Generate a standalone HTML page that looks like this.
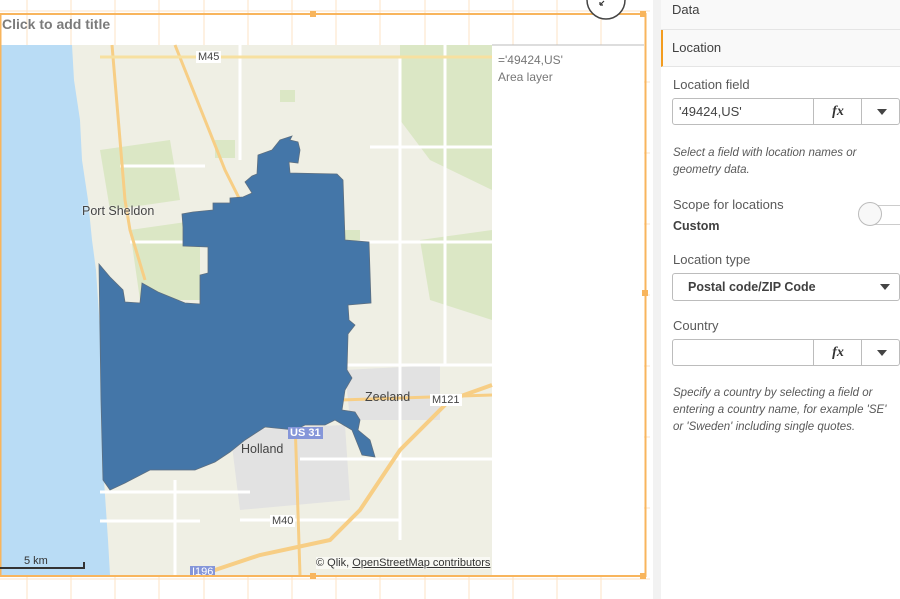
<!DOCTYPE html>
<html><head><meta charset="utf-8"><style>
body{margin:0;width:900px;height:599px;overflow:hidden;background:#fff;font-family:"Liberation Sans",sans-serif;position:relative}
.abs{position:absolute}
.panel{position:absolute;left:661px;top:0;width:239px;height:599px;background:#fff}
.lbl{position:absolute;left:12px;font-size:13px;color:#595959}
.box{position:absolute;left:11px;width:228px;height:27px;border:1px solid #bcbcbc;border-radius:3px;background:#fff;box-sizing:border-box}
.hint{position:absolute;left:12px;font-size:11.5px;font-style:italic;color:#595959;line-height:17px;width:220px}
.fx{position:absolute;left:140px;top:0;width:48px;height:25px;border-left:1px solid #bcbcbc;font:italic bold 14px "Liberation Serif",serif;text-align:center;line-height:25px;color:#333}
.dd{position:absolute;left:188px;top:0;width:40px;height:25px;border-left:1px solid #bcbcbc}
.tri{position:absolute;width:0;height:0;border-left:5px solid transparent;border-right:5px solid transparent;border-top:6px solid #444}
.rl{position:absolute;background:#fff;font-size:11px;color:#444;padding:0 2px;line-height:12px}
</style></head><body>
<svg class="abs" style="left:0;top:0" width="661" height="599">
<g stroke="#fde3c6" stroke-width="1">
<line x1="27" y1="0" x2="27" y2="599"/><line x1="71" y1="0" x2="71" y2="599"/><line x1="115" y1="0" x2="115" y2="599"/><line x1="159" y1="0" x2="159" y2="599"/><line x1="204" y1="0" x2="204" y2="599"/><line x1="248" y1="0" x2="248" y2="599"/><line x1="292" y1="0" x2="292" y2="599"/><line x1="336" y1="0" x2="336" y2="599"/><line x1="380" y1="0" x2="380" y2="599"/><line x1="425" y1="0" x2="425" y2="599"/><line x1="469" y1="0" x2="469" y2="599"/><line x1="513" y1="0" x2="513" y2="599"/><line x1="557" y1="0" x2="557" y2="599"/><line x1="601" y1="0" x2="601" y2="599"/>
<line x1="0" y1="11" x2="650" y2="11"/><line x1="0" y1="82" x2="650" y2="82"/><line x1="0" y1="153" x2="650" y2="153"/><line x1="0" y1="224" x2="650" y2="224"/><line x1="0" y1="295" x2="650" y2="295"/><line x1="0" y1="366" x2="650" y2="366"/><line x1="0" y1="437" x2="650" y2="437"/><line x1="0" y1="508" x2="650" y2="508"/><line x1="0" y1="579" x2="650" y2="579"/>
</g>
<rect x="0" y="45" width="492" height="530" fill="#efefe4"/>
<rect x="492" y="45" width="152" height="530" fill="#fff"/>
<line x1="492" y1="45" x2="644" y2="45" stroke="#bbb"/>
<!-- green patches -->
<g fill="#dbe7c5">
<path d="M400 45 L492 45 L492 190 L430 160 L400 120Z"/>
<path d="M420 240 L492 230 L492 320 L430 300Z"/>
<path d="M130 230 L200 220 L200 300 L140 300Z"/>
<path d="M100 150 L170 140 L180 200 L110 210Z"/>
<rect x="280" y="90" width="15" height="12"/><rect x="215" y="140" width="20" height="18"/><rect x="345" y="230" width="15" height="14"/>
</g>
<!-- urban grey -->
<g fill="#e2e2e2"><path d="M230 430 L345 425 L350 500 L240 510Z"/><path d="M345 370 L440 365 L440 420 L350 420Z"/></g>
<!-- water -->
<path d="M0 45 L72 45 L74 80 L80 120 L82 160 L88 200 L92 240 L96 270 L100 330 L102 400 L104 480 L108 540 L110 575 L0 575Z" fill="#b9dcf5"/>
<!-- roads -->
<g stroke="#fff" stroke-width="3" fill="none">
<line x1="120" y1="57" x2="492" y2="57"/><line x1="240" y1="45" x2="240" y2="160"/><line x1="400" y1="57" x2="400" y2="540"/>
<line x1="120" y1="166" x2="205" y2="166"/><line x1="130" y1="242" x2="492" y2="242"/><line x1="370" y1="147" x2="492" y2="147"/>
<line x1="330" y1="365" x2="492" y2="365"/><line x1="300" y1="459" x2="492" y2="459"/><line x1="100" y1="492" x2="250" y2="492"/>
<line x1="100" y1="521" x2="200" y2="521"/><line x1="240" y1="520" x2="400" y2="520"/><line x1="175" y1="480" x2="175" y2="575"/>
<line x1="445" y1="45" x2="445" y2="365"/>
</g>
<g stroke="#f7ce85" stroke-width="3" fill="none">
<path d="M112 45 L120 140 L125 200 L130 230 L145 280"/>
<path d="M175 45 L225 170 L245 210"/>
<line x1="100" y1="57" x2="492" y2="57" stroke="#f7e0a0"/>
<path d="M492 385 L450 400 L400 450 L360 510 L330 540 L260 555 L200 575" stroke-width="4"/>
<path d="M295 420 L300 575"/><path d="M340 400 L492 395"/>
</g>
<!-- blue area -->
<path d="M99 264 L110 277 L123 290 L125 302 L140 303 L142 283 L158 292 L185 303 L200 304 L200 275 L208 273 L208 247 L183 246 L183 227 L182 214 L193 212 L213 210 L213 203 L230 203 L230 198 L243 197 L252 193 L245 182 L252 176 L257 174 L258 155 L272 150 L280 140 L292 136 L290 140 L298 142 L300 150 L298 163 L289 162 L290 173 L337 174 L343 180 L345 240 L369 242 L371 303 L348 305 L349 320 L355 325 L348 334 L347 370 L352 378 L345 390 L342 410 L355 412 L360 420 L358 430 L370 440 L375 457 L362 455 L352 430 L335 420 L325 425 L305 425 L295 430 L265 427 L245 440 L230 452 L215 462 L195 470 L150 470 L125 483 L110 490 L103 480 L101 400 Z" fill="#4476a8" stroke="#5d6f80" stroke-width="0.8"/>
<!-- frame -->
<rect x="0.5" y="14" width="645" height="562" fill="none" stroke="#f8b55d" stroke-width="2"/>
<rect x="310" y="11" width="6" height="6" fill="#f8b55d"/><rect x="640" y="11" width="6" height="6" fill="#f8b55d"/><rect x="310" y="573" width="6" height="6" fill="#f8b55d"/><rect x="640" y="573" width="6" height="6" fill="#f8b55d"/><rect x="642" y="290" width="6" height="6" fill="#f8b55d"/>
<circle cx="606" cy="0" r="19" fill="#fff" stroke="#444" stroke-width="1.5"/>
<path d="M600 5 L604 1 M600 5 L600 2 M600 5 L603 5" stroke="#333" stroke-width="1.2"/>
<!-- scale -->
<path d="M0 568 L84 568 L84 562" stroke="#333" stroke-width="2" fill="none"/>
<rect x="650" y="0" width="3" height="599" fill="#fff"/>
<rect x="653" y="0" width="8" height="599" fill="#f2f2f2"/>
</svg>
<div class="abs" style="left:2px;top:16px;font-size:14px;font-weight:bold;color:#7b7b7b">Click to add title</div>
<div class="abs" style="left:498px;top:52px;font-size:12px;color:#777;line-height:17px">='49424,US'<br>Area layer</div>
<div class="abs" style="left:82px;top:204px;font-size:12.5px;color:#444;text-shadow:0 0 2px #fff">Port Sheldon</div>
<div class="abs" style="left:365px;top:390px;font-size:12.5px;color:#444">Zeeland</div>
<div class="abs" style="left:241px;top:442px;font-size:12.5px;color:#444">Holland</div>
<div class="rl" style="left:196px;top:51px">M45</div>
<div class="rl" style="left:430px;top:394px">M121</div>
<div class="rl" style="left:270px;top:515px">M40</div>
<div class="rl" style="left:288px;top:427px;background:#8596d9;color:#fff;font-weight:bold">US 31</div>
<div class="rl" style="left:190px;top:566px;background:#8596d9;color:#fff;height:9px;overflow:hidden">I196</div>
<div class="abs" style="left:24px;top:555px;font-size:11px;color:#333">5 km</div>
<div class="abs" style="left:316px;top:557px;font-size:11px;color:#333;background:rgba(255,255,255,.6)">© Qlik, <u>OpenStreetMap contributors</u></div>
<div class="panel">
<div class="abs" style="left:0;top:0;width:239px;height:29px;background:#f9f9f9;border-bottom:1px solid #e5e5e5"></div>
<div class="abs" style="left:11px;top:2px;font-size:13px;color:#404040">Data</div>
<div class="abs" style="left:0;top:30px;width:239px;height:37px;background:#f9f9f9;border-bottom:1px solid #e5e5e5;border-left:2px solid #f39c1f;box-sizing:border-box"></div>
<div class="abs" style="left:11px;top:40px;font-size:13px;color:#404040">Location</div>
<div class="lbl" style="top:77px">Location field</div>
<div class="box" style="top:98px"><span class="abs" style="left:6px;top:5px;font-size:13px;color:#444">'49424,US'</span><div class="fx">fx</div><div class="dd"><div class="tri" style="left:15px;top:10px"></div></div></div>
<div class="hint" style="top:145px">Select a field with location names or geometry data.</div>
<div class="lbl" style="top:197px">Scope for locations</div>
<div class="lbl" style="top:219px;font-weight:bold;color:#404040;font-size:12.5px">Custom</div>
<div class="abs" style="left:198px;top:205px;width:50px;height:18px;border:1px solid #ccc;border-radius:10px;background:#fff"></div>
<div class="abs" style="left:197px;top:202px;width:22px;height:22px;border:1px solid #bbb;border-radius:50%;background:#f8f8f8"></div>
<div class="lbl" style="top:252px">Location type</div>
<div class="box" style="top:273px;height:28px"><span class="abs" style="left:15px;top:6px;font-size:12.5px;font-weight:bold;color:#404040">Postal code/ZIP Code</span><div class="tri" style="left:207px;top:10px"></div></div>
<div class="lbl" style="top:318px">Country</div>
<div class="box" style="top:339px"><div class="fx">fx</div><div class="dd"><div class="tri" style="left:15px;top:10px"></div></div></div>
<div class="hint" style="top:385px">Specify a country by selecting a field or entering a country name, for example 'SE' or 'Sweden' including single quotes.</div>
</div>
</body></html>
